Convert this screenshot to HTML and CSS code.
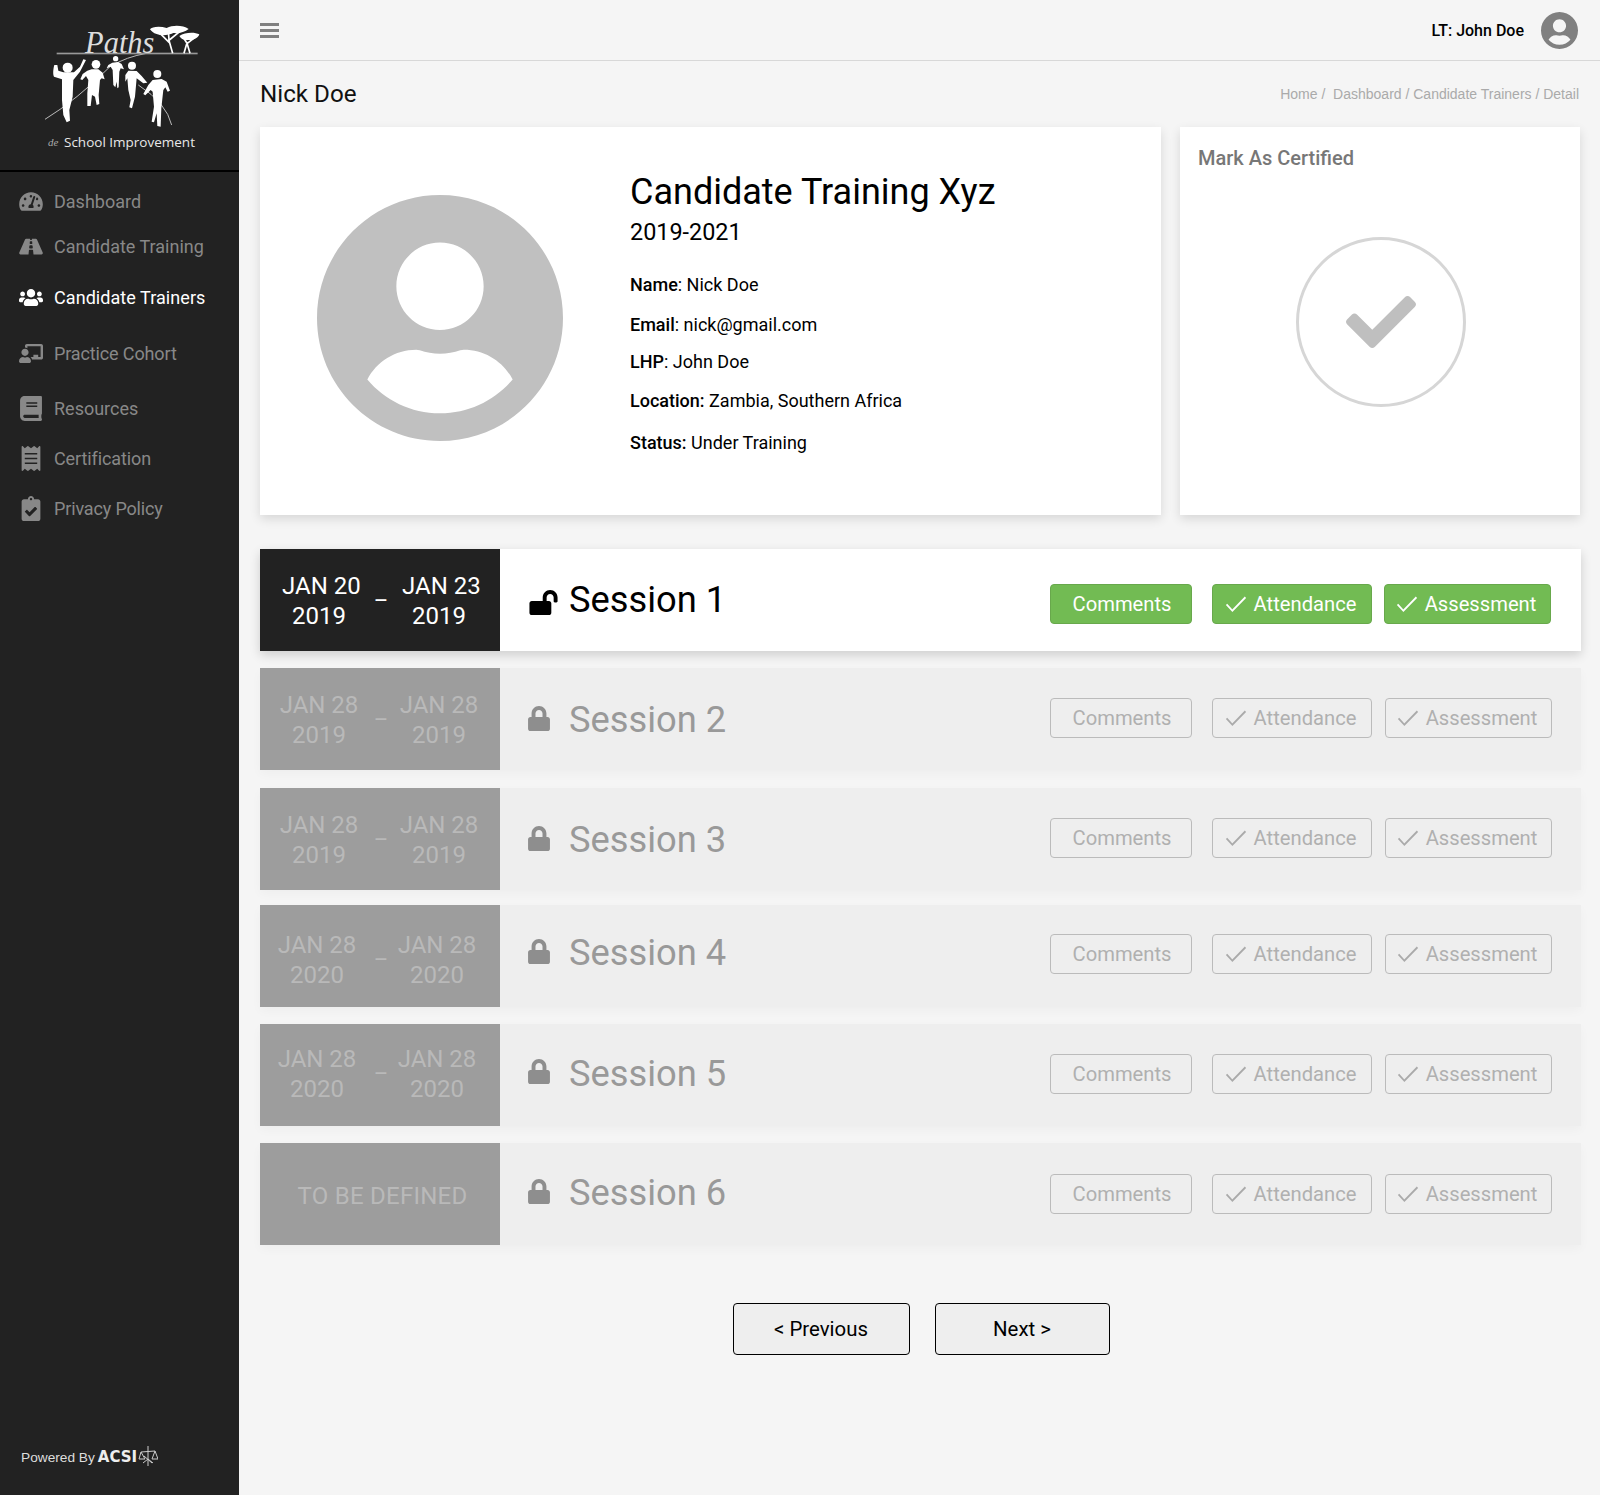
FILE: index.html

```html
<!DOCTYPE html>
<html lang="en">
<head>
    <meta charset="UTF-8">
    <meta name="viewport" content="width=device-width, initial-scale=1.0">
    <title>Candidate Trainer Detail</title>
    <link rel="stylesheet" href="styles.css">
</head>
<body>

<svg class="sprite" width="0" height="0" aria-hidden="true">
    <symbol id="i-lock" viewBox="0 0 448 512"><path d="M400 224h-24v-72C376 68.2 307.8 0 224 0S72 68.2 72 152v72H48c-26.5 0-48 21.5-48 48v192c0 26.5 21.5 48 48 48h352c26.5 0 48-21.5 48-48V272c0-26.5-21.5-48-48-48zm-104 0H152v-72c0-39.7 32.3-72 72-72s72 32.3 72 72v72z"/></symbol>
    <symbol id="i-open" viewBox="0 0 576 512"><path d="M423.5 0C339.5.3 272 69.5 272 153.5V224H48c-26.5 0-48 21.5-48 48v192c0 26.5 21.5 48 48 48h352c26.5 0 48-21.5 48-48V272c0-26.5-21.5-48-48-48h-48v-71.1c0-39.6 31.7-72.5 71.3-72.9 40-.4 72.7 32.1 72.7 72v80c0 13.3 10.7 24 24 24h32c13.3 0 24-10.7 24-24v-80C576 68 507.5-.3 423.5 0z"/></symbol>
    <symbol id="i-tick" viewBox="0 0 24 20"><path d="M1.5 10.5 8 17.5 22.5 2.5" fill="none" stroke="currentColor" stroke-width="2"/></symbol>
    <symbol id="i-user" viewBox="0 8 496 496"><path d="M248 8C111 8 0 119 0 256s111 248 248 248 248-111 248-248S385 8 248 8zm0 96c48.6 0 88 39.4 88 88s-39.4 88-88 88-88-39.4-88-88 39.4-88 88-88zm0 344c-58.7 0-111.3-26.6-146.5-68.2 18.8-35.4 55.6-59.8 98.5-59.8 2.4 0 4.8.4 7.1 1.1 13 4.2 26.6 6.9 40.9 6.9 14.3 0 28-2.7 40.9-6.9 2.3-.7 4.7-1.1 7.1-1.1 42.9 0 79.7 24.4 98.5 59.8C359.3 421.4 306.7 448 248 448z"/></symbol>
</svg>

<div class="app">
    <aside class="sidebar">
        <div class="logo">
            <svg width="239" height="170" viewBox="0 0 239 170">
                <g transform="scale(.3333)">
                    <!-- ribbon -->
                    <path d="M135 358Q230 300 330 200Q380 170 440 160M415 255Q500 310 515 375" fill="none" stroke="#bbb" stroke-width="3"/>
                    <rect x="170" y="158" width="423" height="5" fill="#999"/>
                    <!-- trees -->
                    <path d="M518 160 506 118M508 128 478 98M507 118 505 92M508 120 540 94M570 160 560 126M561 130 548 110M562 130 585 112M552 160 560 132" fill="none" stroke="#fff" stroke-width="5"/>
                    <g fill="#fff">
                        <path d="M450 88C455 80 480 78 500 84C520 74 550 76 566 87C555 97 535 101 520 99C505 106 485 108 470 102C460 100 455 94 450 88Z"/>
                        <path d="M538 108C555 96 585 96 598 103C595 114 580 122 566 120C552 122 542 116 538 108Z"/>
                        <!-- runners -->
                        <circle cx="203" cy="203" r="15"/>
                        <path d="M163 195C160 205 158 222 162 230L186 238L186 300L190 345L200 367L210 362L208 330L218 290L220 240L240 215L258 180L250 178L240 200L222 217L190 217L175 212L172 195Z"/>
                        <circle cx="288" cy="193" r="13"/>
                        <path d="M262 212L248 222L241 238L247 240L258 228L265 240L262 280L262 318L272 318L276 285L285 290L290 315L298 312L296 285L300 240L305 235L314 238L308 218L295 208L275 208Z"/>
                        <circle cx="347" cy="176" r="8"/>
                        <path d="M337 188L325 195L320 205L332 200L338 210L340 255L346 262L350 245L352 265L356 262L358 215L362 205L372 208L365 192L355 186Z"/>
                        <circle cx="396" cy="197" r="12"/>
                        <path d="M385 212L376 225L376 245L382 235L385 270L392 300L388 322L396 325L405 290L410 235L430 250L442 248L425 228L410 213Z"/>
                        <circle cx="472" cy="222" r="12"/>
                        <path d="M458 240L445 255L430 282L436 286L452 270L458 275L462 320L455 365L462 367L470 340L472 378L482 380L484 325L490 270L496 262L503 275L510 272L500 245L485 237Z"/>
                    </g>
                </g>
                <text class="logo-paths" x="85" y="53">Paths</text>
                <text class="logo-de" x="48" y="146">de</text>
                <text class="logo-sub" x="64" y="147">School Improvement</text>
            </svg>
        </div>
        <nav class="nav">
            <a class="nav-item nav-dash" href="#"><svg viewBox="0 0 576 512"><path d="M288 32C128.94 32 0 160.94 0 320c0 52.8 14.25 102.26 39.06 144.8 5.61 9.62 16.3 15.2 27.44 15.2h443c11.14 0 21.83-5.58 27.44-15.2C561.75 422.26 576 372.8 576 320c0-159.06-128.94-288-288-288zm0 64c14.71 0 26.58 10.13 30.32 23.65-1.11 2.26-2.64 4.23-3.45 6.67l-9.22 27.67c-5.13 3.49-10.97 6.01-17.64 6.01-17.67 0-32-14.33-32-32S270.33 96 288 96zM96 384c-17.67 0-32-14.33-32-32s14.33-32 32-32 32 14.33 32 32-14.33 32-32 32zm48-160c-17.67 0-32-14.33-32-32s14.33-32 32-32 32 14.33 32 32-14.33 32-32 32zm246.77-72.41l-61.33 184C343.13 347.33 352 364.54 352 384c0 11.72-3.38 22.55-8.88 32H232.88c-5.5-9.45-8.88-20.28-8.88-32 0-33.94 26.5-61.43 59.9-63.59l61.34-184.01c4.17-12.56 17.73-19.45 30.36-15.17 12.57 4.19 19.35 17.79 15.17 30.36zm14.66 57.2l15.52-46.55c3.47-1.29 7.13-2.23 11.05-2.23 17.67 0 32 14.33 32 32s-14.33 32-32 32c-11.38-.01-20.89-6.28-26.57-15.22zM480 384c-17.67 0-32-14.33-32-32s14.33-32 32-32 32 14.33 32 32-14.33 32-32 32z"/></svg>Dashboard</a>
            <a class="nav-item nav-train" href="#"><svg viewBox="0 0 576 512"><path d="M573.19 402.67l-139.79-320C428.43 71.29 417.6 64 405.68 64h-97.59l2.45 23.16c.5 4.72-3.21 8.84-7.96 8.84h-29.16c-4.75 0-8.46-4.12-7.96-8.84L267.91 64h-97.59c-11.93 0-22.76 7.29-27.73 18.67L2.8 402.67C-6.45 423.86 8.31 448 30.54 448h196.84l10.31-97.68c.86-8.14 7.72-14.32 15.91-14.32h68.8c8.19 0 15.05 6.18 15.91 14.32L348.62 448h196.84c22.23 0 36.99-24.14 27.73-45.33zM260.4 135.16a8 8 0 0 1 7.96-7.16h39.29c4.09 0 7.53 3.09 7.96 7.16l4.6 43.58c.75 7.09-4.81 13.26-11.93 13.26h-40.54c-7.13 0-12.68-6.17-11.93-13.26l4.59-43.58zM315.64 304h-55.29c-9.5 0-16.91-8.23-15.91-17.68l5.07-48c.86-8.14 7.72-14.32 15.91-14.32h45.15c8.19 0 15.05 6.18 15.91 14.32l5.07 48c1 9.45-6.41 17.68-15.91 17.68z"/></svg>Candidate Training</a>
            <a class="nav-item nav-trainers active" href="#"><svg viewBox="0 0 640 512"><path d="M96 224c35.3 0 64-28.7 64-64s-28.7-64-64-64-64 28.7-64 64 28.7 64 64 64zm448 0c35.3 0 64-28.7 64-64s-28.7-64-64-64-64 28.7-64 64 28.7 64 64 64zm32 32h-64c-17.6 0-33.5 7.1-45.1 18.6 40.3 22.1 68.9 62 75.1 109.4h66c17.7 0 32-14.3 32-32v-32c0-35.3-28.7-64-64-64zm-256 0c61.9 0 112-50.1 112-112S381.9 32 320 32 208 82.1 208 144s50.1 112 112 112zm76.8 32h-8.3c-20.8 10-43.9 16-68.5 16s-47.6-6-68.5-16h-8.3C179.6 288 128 339.6 128 403.2V432c0 26.5 21.5 48 48 48h288c26.5 0 48-21.5 48-48v-28.8c0-63.6-51.6-115.2-115.2-115.2zm-223.7-13.4C161.5 263.1 145.6 256 128 256H64c-35.3 0-64 28.7-64 64v32c0 17.7 14.3 32 32 32h65.9c6.3-47.4 34.9-87.3 75.2-109.4z"/></svg>Candidate Trainers</a>
            <a class="nav-item nav-cohort" href="#"><svg viewBox="0 0 640 512"><path d="M208 352c-2.39 0-4.78.35-7.06 1.09C187.98 357.3 174.35 360 160 360c-14.35 0-27.98-2.7-40.95-6.91-2.28-.74-4.66-1.09-7.05-1.09C49.94 352-.33 402.48 0 464.62.14 490.88 21.73 512 48 512h224c26.27 0 47.86-21.12 48-47.38.33-62.14-49.94-112.62-112-112.62zm-48-32c53.02 0 96-42.98 96-96s-42.98-96-96-96-96 42.98-96 96 42.98 96 96 96zM592 0H208c-26.47 0-48 22.25-48 49.59V96c23.42 0 45.1 6.78 64 17.8V64h352v288h-64v-64H384v64h-76.24c19.1 16.69 33.12 38.73 39.69 64H592c26.47 0 48-22.25 48-49.59V49.59C640 22.25 618.47 0 592 0z"/></svg>Practice Cohort</a>
            <a class="nav-item nav-res tall" href="#"><svg viewBox="0 0 448 512"><path d="M448 360V24c0-13.3-10.7-24-24-24H96C43 0 0 43 0 96v320c0 53 43 96 96 96h328c13.3 0 24-10.7 24-24v-16c0-7.5-3.5-14.3-8.9-18.7-4.2-15.4-4.2-59.3 0-74.7 5.4-4.3 8.9-11.1 8.9-18.6zM128 134c0-3.3 2.7-6 6-6h212c3.3 0 6 2.7 6 6v20c0 3.3-2.7 6-6 6H134c-3.3 0-6-2.7-6-6v-20zm0 64c0-3.3 2.7-6 6-6h212c3.3 0 6 2.7 6 6v20c0 3.3-2.7 6-6 6H134c-3.3 0-6-2.7-6-6v-20zm253.4 250H96c-17.7 0-32-14.3-32-32 0-17.6 14.4-32 32-32h285.4c-1.9 17.1-1.9 46.9 0 64z"/></svg>Resources</a>
            <a class="nav-item nav-cert tall" href="#"><svg viewBox="0 0 384 512"><path d="M358.4 3.2L320 48 265.6 3.2a15.9 15.9 0 0 0-19.2 0L192 48 137.6 3.2a15.9 15.9 0 0 0-19.2 0L64 48 25.6 3.2C15-4.7 0 2.8 0 16v480c0 13.2 15 20.7 25.6 12.8L64 464l54.4 44.8a15.9 15.9 0 0 0 19.2 0L192 464l54.4 44.8a15.9 15.9 0 0 0 19.2 0L320 464l38.4 44.8c10.5 7.9 25.6.4 25.6-12.8V16c0-13.2-15-20.7-25.6-12.8zM320 360c0 4.4-3.6 8-8 8H72c-4.4 0-8-3.6-8-8v-16c0-4.4 3.6-8 8-8h240c4.4 0 8 3.6 8 8v16zm0-96c0 4.4-3.6 8-8 8H72c-4.4 0-8-3.6-8-8v-16c0-4.4 3.6-8 8-8h240c4.4 0 8 3.6 8 8v16zm0-96c0 4.4-3.6 8-8 8H72c-4.4 0-8-3.6-8-8v-16c0-4.4 3.6-8 8-8h240c4.4 0 8 3.6 8 8v16z"/></svg>Certification</a>
            <a class="nav-item nav-priv tall" href="#"><svg viewBox="0 0 384 512"><path d="M336 64h-80c0-35.3-28.7-64-64-64s-64 28.7-64 64H48C21.5 64 0 85.5 0 112v352c0 26.5 21.5 48 48 48h288c26.5 0 48-21.5 48-48V112c0-26.5-21.5-48-48-48zM192 40c13.3 0 24 10.7 24 24s-10.7 24-24 24-24-10.7-24-24 10.7-24 24-24zm121.2 231.8l-143 141.8c-4.7 4.7-12.3 4.6-17-.1l-82.6-83.3c-4.7-4.7-4.6-12.3.1-17L99.1 285c4.7-4.7 12.3-4.6 17 .1l46 46.4 106-105.2c4.7-4.7 12.3-4.6 17 .1l28.2 28.4c4.7 4.8 4.6 12.3-.1 17z"/></svg>Privacy Policy</a>
        </nav>
        <div class="powered">Powered By <b>ACSI</b>
            <svg class="acsi-mark" viewBox="0 0 20 20"><path d="M10 0v20M3 6 17 5M3 6 1 13h6zM17 5l-3 8h6zM5 17l5-4 5 4M6 10l8 7" fill="none" stroke="#ccc" stroke-width="1"/></svg>
        </div>
    </aside>

    <main class="main">
        <header class="topbar">
            <div class="burger"><span></span><span></span><span></span></div>
            <div class="topuser">
                <span>LT: John Doe</span>
                <svg class="topuser-icon"><use href="#i-user"/></svg>
            </div>
        </header>

        <div class="content">
            <div class="page-head">
                <h2 class="page-title">Nick Doe</h2>
                <div class="crumbs">Home /&nbsp; Dashboard / Candidate Trainers / Detail</div>
            </div>

            <div class="cards">
                <section class="card profile">
                    <svg class="avatar"><use href="#i-user"/></svg>
                    <div class="info">
                        <h1>Candidate Training Xyz</h1>
                        <div class="years">2019-2021</div>
                        <p class="line-name"><b>Name</b>: Nick Doe</p>
                        <p class="line-email"><b>Email</b>: nick@gmail.com</p>
                        <p class="line-lhp"><b>LHP</b>: John Doe</p>
                        <p class="line-loc"><b>Location:</b> Zambia, Southern Africa</p>
                        <p class="line-status"><b>Status:</b> Under Training</p>
                    </div>
                </section>
                <section class="card certify">
                    <h3>Mark As Certified</h3>
                    <div class="cert-ring">
                        <svg viewBox="0 0 512 512"><path d="M173.898 439.404l-166.4-166.4c-9.997-9.997-9.997-26.206 0-36.204l36.203-36.204c9.997-9.998 26.207-9.998 36.204 0L192 312.69 432.095 72.596c9.997-9.997 26.207-9.997 36.204 0l36.203 36.204c9.997 9.997 9.997 26.206 0 36.204l-294.4 294.401c-9.998 9.997-26.207 9.997-36.204-.001z"/></svg>
                    </div>
                </section>
            </div>

            <div class="sessions">
                <div class="session open">
                    <div class="dates">
                        <div class="date shift">JAN 20<br>2019</div><i>_</i><div class="date shift">JAN 23<br>2019</div>
                    </div>
                    <svg class="lock-open"><use href="#i-open"/></svg>
                    <div class="name">Session 1</div>
                    <div class="actions">
                        <a class="btn btn-comments">Comments</a>
                        <a class="btn btn-att"><svg><use href="#i-tick"/></svg>Attendance</a>
                        <a class="btn btn-ass"><svg><use href="#i-tick"/></svg>Assessment</a>
                    </div>
                </div>
                <div class="session">
                    <div class="dates">
                        <div class="date">JAN 28<br>2019</div><i>_</i><div class="date">JAN 28<br>2019</div>
                    </div>
                    <svg class="lock"><use href="#i-lock"/></svg>
                    <div class="name">Session 2</div>
                    <div class="actions">
                        <a class="btn btn-comments">Comments</a>
                        <a class="btn btn-att"><svg><use href="#i-tick"/></svg>Attendance</a>
                        <a class="btn btn-ass"><svg><use href="#i-tick"/></svg>Assessment</a>
                    </div>
                </div>
                <div class="session">
                    <div class="dates">
                        <div class="date">JAN 28<br>2019</div><i>_</i><div class="date">JAN 28<br>2019</div>
                    </div>
                    <svg class="lock"><use href="#i-lock"/></svg>
                    <div class="name">Session 3</div>
                    <div class="actions">
                        <a class="btn btn-comments">Comments</a>
                        <a class="btn btn-att"><svg><use href="#i-tick"/></svg>Attendance</a>
                        <a class="btn btn-ass"><svg><use href="#i-tick"/></svg>Assessment</a>
                    </div>
                </div>
                <div class="session">
                    <div class="dates wide">
                        <div class="date">JAN 28<br>2020</div><i>_</i><div class="date">JAN 28<br>2020</div>
                    </div>
                    <svg class="lock"><use href="#i-lock"/></svg>
                    <div class="name">Session 4</div>
                    <div class="actions">
                        <a class="btn btn-comments">Comments</a>
                        <a class="btn btn-att"><svg><use href="#i-tick"/></svg>Attendance</a>
                        <a class="btn btn-ass"><svg><use href="#i-tick"/></svg>Assessment</a>
                    </div>
                </div>
                <div class="session">
                    <div class="dates wide">
                        <div class="date">JAN 28<br>2020</div><i>_</i><div class="date">JAN 28<br>2020</div>
                    </div>
                    <svg class="lock"><use href="#i-lock"/></svg>
                    <div class="name">Session 5</div>
                    <div class="actions">
                        <a class="btn btn-comments">Comments</a>
                        <a class="btn btn-att"><svg><use href="#i-tick"/></svg>Attendance</a>
                        <a class="btn btn-ass"><svg><use href="#i-tick"/></svg>Assessment</a>
                    </div>
                </div>
                <div class="session">
                    <div class="dates tbd">TO BE DEFINED</div>
                    <svg class="lock"><use href="#i-lock"/></svg>
                    <div class="name">Session 6</div>
                    <div class="actions">
                        <a class="btn btn-comments">Comments</a>
                        <a class="btn btn-att"><svg><use href="#i-tick"/></svg>Attendance</a>
                        <a class="btn btn-ass"><svg><use href="#i-tick"/></svg>Assessment</a>
                    </div>
                </div>
            </div>

            <div class="pager">
                <button class="pager-btn prev">&lt; Previous</button>
                <button class="pager-btn next">Next &gt;</button>
            </div>
        </div>
    </main>
</div>

</body>
</html>
```

FILE: styles.css

```css
:root {
    --dark: #222;
    --bg: #f5f5f5;
    --green: #72bb53;
    --muted: #999;
}
* {
    box-sizing: border-box;
}
body {
    margin: 0;
    font-family: Roboto, sans-serif;
    background: var(--bg);
    color: #000;
}
.sprite {
    display: block;
}
.app {
    display: flex;
    min-height: 1495px;
}

/* sidebar */
.sidebar {
    width: 239px;
    flex: none;
    background: var(--dark);
    display: flex;
    flex-direction: column;
}
.logo {
    height: 172px;
    border-bottom: 2px solid #000;
}
.logo svg {
    display: block;
}
.logo-paths {
    font-family: "Liberation Serif", serif;
    font-style: italic;
    font-size: 30.5px;
    fill: #ddd;
}
.logo-de {
    font-family: "Liberation Serif", serif;
    font-style: italic;
    font-size: 11px;
    fill: #aaa;
}
.logo-sub {
    font-family: "Open Sans", sans-serif;
    font-size: 13.5px;
    fill: #e8e8e8;
}
.nav {
    display: flex;
    flex-direction: column;
    padding-left: 19px;
    margin-top: 17px;
}
.nav-item {
    display: flex;
    align-items: center;
    height: 24px;
    color: #888;
    font-size: 18px;
    text-decoration: none;
    white-space: nowrap;
}
.nav-item svg {
    width: 24px;
    height: 21px;
    margin-right: 11px;
    fill: currentColor;
    flex: none;
}
.nav-item.tall svg {
    height: 25px;
}
.nav-item.active {
    color: #fff;
    letter-spacing: .06px;
}
.nav-train { margin-top: 21px; }
.nav-trainers { margin-top: 27px; }
.nav-cohort { margin-top: 32px; letter-spacing: -.13px; }
.nav-res { margin-top: 31px; }
.nav-cert { margin-top: 26px; letter-spacing: -.1px; }
.nav-priv { margin-top: 26px; letter-spacing: -.15px; }
.powered {
    margin-top: auto;
    padding: 0 0 29px 21px;
    display: flex;
    align-items: center;
    color: #ddd;
    font-family: "Liberation Sans", sans-serif;
    font-size: 13.7px;
}
.powered b {
    margin-left: 3px;
    font-family: "DejaVu Sans", sans-serif;
    font-size: 15px;
    font-weight: 700;
    color: #eee;
}
.acsi-mark {
    width: 20px;
    height: 20px;
    margin: -2px 0 0 1px;
}

/* top bar */
.main {
    flex: 1;
    min-width: 0;
}
.topbar {
    height: 61px;
    border-bottom: 1px solid #d8d8d8;
    display: flex;
    align-items: center;
    justify-content: space-between;
    padding: 0 22px 0 21px;
}
.burger {
    width: 19px;
    display: flex;
    flex-direction: column;
    gap: 3px;
}
.burger span {
    height: 3px;
    background: #808080;
}
.topuser {
    display: flex;
    align-items: center;
    gap: 17px;
    font-size: 16px;
    font-weight: 500;
}
.topuser-icon {
    width: 37px;
    height: 37px;
    fill: #808080;
}

/* page */
.content {
    padding: 0 19px 0 21px;
}
.page-head {
    height: 66px;
    display: flex;
    align-items: center;
    justify-content: space-between;
    padding-right: 2px;
}
.page-title {
    margin: 0;
    font-size: 24.2px;
    font-weight: 400;
    color: #111;
}
.crumbs {
    font-family: "Liberation Sans", sans-serif;
    font-size: 14px;
    color: #aaa;
}
.cards {
    display: flex;
    gap: 19px;
}
.card {
    background: #fff;
    height: 388px;
    box-shadow: 0 4px 10px rgba(0,0,0,0.12);
}
.profile {
    width: 901px;
    display: flex;
}
.avatar {
    width: 246px;
    height: 246px;
    margin: 68px 0 0 57px;
    fill: #c0c0c0;
}
.info {
    margin-left: 67px;
    padding-top: 43px;
    font-size: 18px;
}
.info h1 {
    margin: 0;
    font-size: 36px;
    font-weight: 400;
    line-height: 44px;
}
.years {
    font-size: 23.4px;
    line-height: 28px;
    margin-top: 4px;
}
.info p {
    margin: 0;
    line-height: 24px;
}
.info b {
    font-weight: 500;
}
.info .line-name { margin-top: 27px; }
.info .line-email { margin-top: 16px; }
.info .line-lhp { margin-top: 13px; }
.info .line-loc { margin-top: 15px; }
.info .line-status { margin-top: 18px; }
.certify {
    width: 400px;
    padding: 18px;
}
.certify h3 {
    margin: 0;
    font-size: 20px;
    line-height: 26px;
    font-weight: 500;
    color: #777;
}
.cert-ring {
    width: 170px;
    height: 170px;
    margin: 66px 0 0 98px;
    border: 3px solid #d6d6d6;
    border-radius: 50%;
    display: flex;
    align-items: center;
    justify-content: center;
}
.cert-ring svg {
    width: 70px;
    height: 70px;
    fill: #bfbfbf;
}

/* sessions */
.sessions {
    margin-top: 34px;
    display: flex;
    flex-direction: column;
    gap: 17px;
}
.session {
    height: 102px;
    flex: none;
    display: flex;
    align-items: center;
    background: #eee;
    color: var(--muted);
    box-shadow: 0 4px 10px rgba(0,0,0,0.03);
}
.session.open {
    background: #fff;
    color: #000;
    box-shadow: 0 4px 10px rgba(0,0,0,0.16);
}
.session:nth-child(3) { margin-top: .5px; }
.session:nth-child(4) { margin-top: -1.5px; }
.dates {
    width: 240px;
    height: 100%;
    flex: none;
    background: #9d9d9d;
    color: #b9b9b9;
    font-size: 24px;
    line-height: 30px;
    display: flex;
    align-items: center;
    justify-content: center;
    gap: 13.5px;
    padding: 2px 2px 0 0;
}
.session.open .dates {
    background: var(--dark);
    color: #fff;
}
.session:nth-child(4) .dates {
    padding: 8px 6px 0 0;
}
.session:nth-child(5) .dates {
    padding: 0 6px 2px 0;
}
.dates i {
    width: 13px;
    font-style: normal;
    margin: 0 -3px 20px 3px;
}
.dates.wide i {
    margin: 0 -5px 20px 5px;
}
.date {
    width: 80px;
    text-align: center;
    white-space: nowrap;
}
.date.shift {
    text-indent: 3px;
}
.dates.tbd {
    padding: 3px 0 0 5px;
    letter-spacing: .25px;
}
.lock, .lock-open {
    height: 25px;
    fill: currentColor;
    flex: none;
}
.lock {
    width: 22px;
    margin-left: 28px;
    margin-right: 19px;
    color: #8e8e8e;
}
.lock-open {
    width: 29px;
    margin-left: 29px;
    margin-top: 5px;
    margin-right: 11px;
}
.name {
    font-size: 36.3px;
    margin-bottom: 4px;
}
/* the rows do not centre their title evenly */
.session.open .name { margin-bottom: 2px; }
.session:nth-child(2) .name { margin-bottom: 0; }
.session:nth-child(3) .name { margin-bottom: 0; margin-top: 2px; }
.session:nth-child(4) .name { margin-bottom: 8px; }
.session:nth-child(2) .lock { margin-bottom: 1px; }
.session:nth-child(4) .lock { margin-bottom: 9px; }
.session:nth-child(5) .lock { margin-bottom: 7px; }
.session:nth-child(6) .lock { margin-bottom: 5px; }
.actions {
    margin-left: auto;
    display: flex;
    margin-right: 29px;
}
.session.open .actions { margin-top: 8px; }
.session:nth-child(2) .actions { margin-bottom: 2px; }
.session:nth-child(3) .actions { margin-bottom: 2px; }
.session:nth-child(4) .actions { margin-bottom: 5px; }
.session:nth-child(5) .actions { margin-bottom: 2px; }
.btn {
    height: 40px;
    border: 1px solid #bbb;
    border-radius: 4px;
    display: flex;
    align-items: center;
    justify-content: center;
    font-size: 20.2px;
    color: #b0b0b0;
}
.btn svg {
    width: 22px;
    height: 18px;
    margin-right: 7px;
    color: #aaa;
}
.open .btn {
    background: var(--green);
    border-color: #68a84c;
    color: #fff;
}
.open .btn svg {
    color: #fff;
}
.btn-comments {
    width: 142px;
    padding-left: 2px;
}
.btn-att {
    width: 160px;
    margin-left: 20px;
    padding-right: 3px;
}
.btn-ass {
    width: 167px;
    margin-left: 13px;
    padding-right: 3px;
}
.open .btn-ass {
    margin-left: 12px;
    margin-right: 1px;
}

/* pager */
.pager {
    margin-top: 58px;
    display: flex;
    justify-content: center;
    gap: 25px;
    padding-left: 1px;
}
.pager-btn {
    height: 52px;
    border: 1px solid #000;
    border-radius: 4px;
    background: #eee;
    font-family: Roboto, sans-serif;
    font-size: 20.4px;
    color: #000;
}
.prev { width: 177px; }
.next { width: 175px; }
```
